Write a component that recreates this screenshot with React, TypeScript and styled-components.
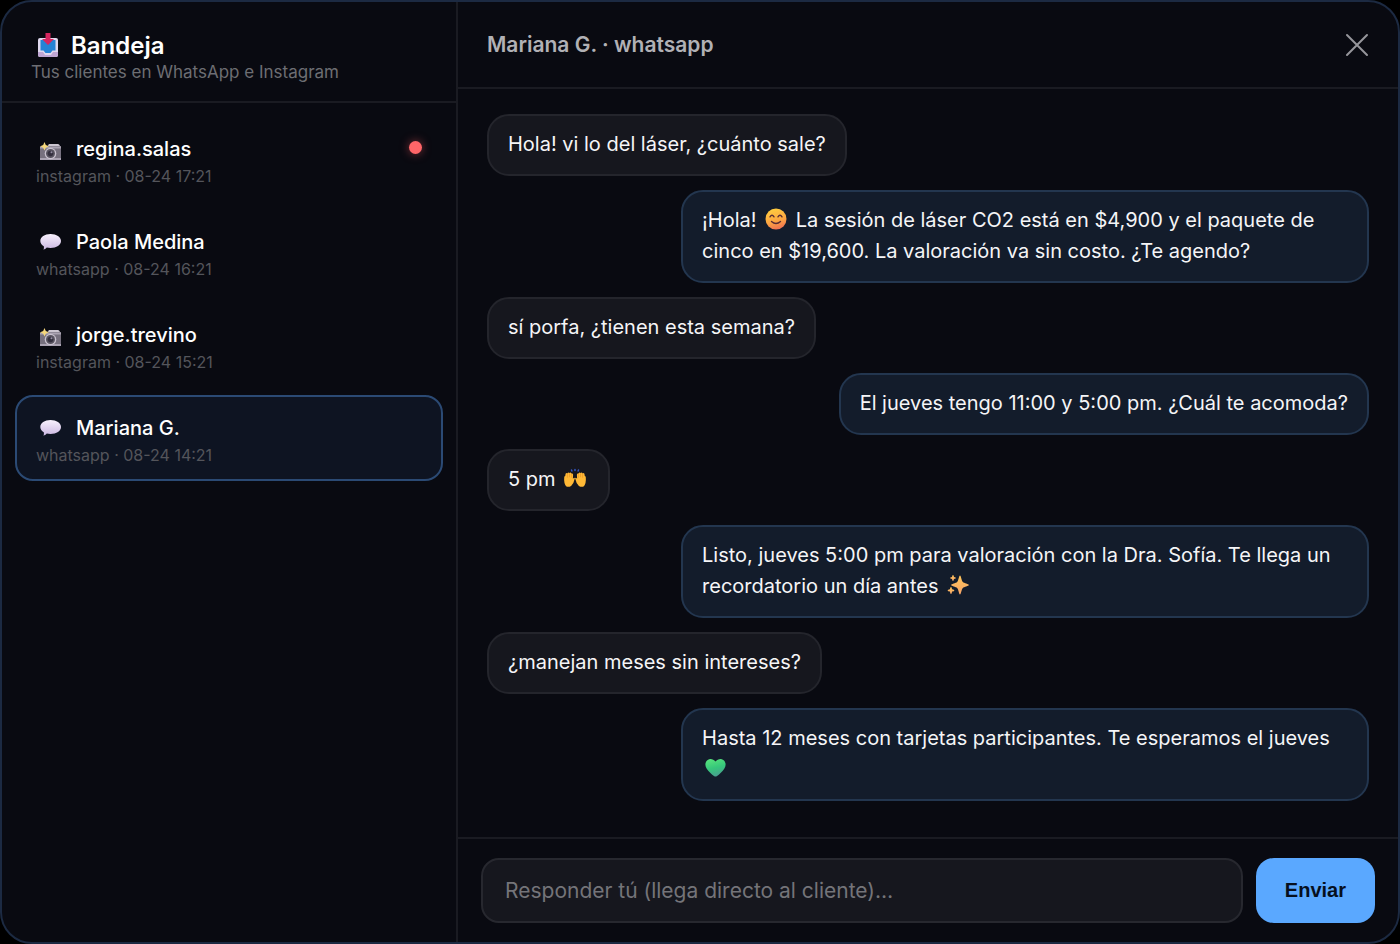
import React from "react";
import styled, { createGlobalStyle, css } from "styled-components";

const GlobalStyle = createGlobalStyle`
  *, *::before, *::after { box-sizing: border-box; }
  body {
    margin: 0;
    background: #000;
    color: #f5f5f7;
    font-family: Inter, "Liberation Sans", sans-serif;
  }
  h1, h2, p, ul, ol { margin: 0; padding: 0; }
  ul, ol { list-style: none; }
  button, input { font: inherit; color: inherit; }
`;

const line = "#1a1b22";

const Shell = styled.main`
  display: grid;
  grid-template-columns: minmax(280px, 456px) minmax(0, 1fr);
  min-height: 100vh;
  border: 2px solid #1c2a42;
  border-radius: 32px;
  background: #090a11;
  overflow: hidden;
`;

const Sidebar = styled.aside`
  border-right: 2px solid ${line};
`;

const SidebarHeader = styled.header`
  padding: 29px 29px 18px;
  border-bottom: 2px solid ${line};
`;

const Brand = styled.h1`
  display: flex;
  align-items: center;
  gap: 12px;
  font-size: 24px;
  line-height: 30px;
  font-weight: 600;
  color: #fff;
`;

const Tagline = styled.p`
  font-size: 17px;
  line-height: 22px;
  color: #6d6e73;
`;

const Conversations = styled.ul`
  display: flex;
  flex-direction: column;
  gap: 7px;
  padding: 13px;
`;

const Conversation = styled.button<{ $active?: boolean }>`
  display: block;
  width: 100%;
  padding: 16px 19px 12px;
  border: 2px solid ${(p) => (p.$active ? "#2b4a74" : "transparent")};
  border-radius: 18px;
  background: ${(p) => (p.$active ? "#0e1422" : "transparent")};
  text-align: left;
  cursor: pointer;
`;

const ConversationTop = styled.span`
  display: flex;
  align-items: center;
  gap: 12px;
  font-size: 20px;
  line-height: 30px;
  font-weight: 500;
  color: #fff;
`;

const Unread = styled.span`
  width: 13px;
  height: 13px;
  align-self: flex-start;
  margin: 7px 0 0 auto;
  border-radius: 50%;
  background: #ff6568;
  box-shadow: 0 0 10px rgba(255, 90, 95, 0.5);
`;

const Meta = styled.span`
  display: block;
  font-size: 16px;
  line-height: 24px;
  color: #54555b;
`;

const Chat = styled.section`
  display: flex;
  flex-direction: column;
  min-width: 0;
`;

const ChatHeader = styled.header`
  display: flex;
  align-items: center;
  justify-content: space-between;
  padding: 26px 24px 25px 29px;
  border-bottom: 2px solid ${line};
`;

const ChatTitle = styled.h2`
  font-size: 21px;
  line-height: 34px;
  font-weight: 600;
  color: #b1b1b5;
`;

const CloseButton = styled.button`
  display: flex;
  padding: 4px;
  border: 0;
  background: none;
  color: #96969b;
  cursor: pointer;
`;

const Messages = styled.ol`
  display: flex;
  flex: 1;
  flex-direction: column;
  align-items: flex-start;
  gap: 14px;
  padding: 25px 29px 36px;
`;

const incoming = css`
  border-color: #24252c;
  background: #16171e;
`;

const outgoing = css`
  align-self: flex-end;
  border-color: #23364f;
  background: #131c2b;
`;

const Bubble = styled.li<{ $mine?: boolean }>`
  max-width: 78%;
  padding: 13px 19px 14px;
  border: 2px solid;
  border-radius: 22px;
  font-size: 20px;
  line-height: 31px;
  ${(p) => (p.$mine ? outgoing : incoming)}
`;

const Composer = styled.form`
  display: flex;
  gap: 13px;
  padding: 19px 23px;
  border-top: 2px solid ${line};
`;

const Reply = styled.input`
  flex: 1;
  min-width: 0;
  height: 65px;
  padding: 0 22px;
  border: 2px solid #27282f;
  border-radius: 18px;
  background: #16171e;
  font-size: 21px;
  outline: none;
  &::placeholder { color: #747479; opacity: 1; }
`;

const Send = styled.button`
  padding: 0 29px;
  border: 0;
  border-radius: 18px;
  background: #5aa8ff;
  color: #06101f;
  font-family: "Liberation Sans", sans-serif;
  font-size: 20px;
  font-weight: 700;
  cursor: pointer;
`;

const Glyph = styled.svg`
  width: 28px;
  height: 26px;
  flex: none;
  vertical-align: -5px;
`;

const Inbox = () => (
  <Glyph viewBox="-1 1 28 26" role="img" aria-label="Bandeja de entrada">
    <path d="M8 6h16q2 0 2 2v15q0 2-2 2H8q-2 0-2-2V8q0-2 2-2z" fill="#e0d9ee" />
    <path d="M6 20h5l2 3h6l2-3h5v3q0 2-2 2H8q-2 0-2-2z" fill="#bfa6d4" />
    <path d="M8.500 8h15v10.500h-3l-2 2.500h-5l-2-2.500h-3z" fill="#2583d5" />
    <path d="M13.500 1h5v6H22l-6 6-6-6h3.500z" fill="#d6265f" />
  </Glyph>
);

const Camera = () => (
  <Glyph viewBox="0 1 28 26" role="img" aria-label="Instagram">
    <path d="M4 12h7l2-3h10l1 2h1v14H4z" fill="#77717f" />
    <path d="M12 11l1-2h9l2 2z" fill="#cbc5d0" />
    <path d="M4 11.500h21v2H4zM4 23h21v2H4z" fill="#aaa3b2" />
    <circle cx="14.500" cy="18.500" r="5.800" fill="#c9c2cf" />
    <circle cx="14.500" cy="18.500" r="4.500" fill="#595561" />
    <circle cx="14.500" cy="18.500" r="2.800" fill="#34303f" />
    <circle cx="15.500" cy="17.300" r="1" fill="#9690a4" />
    <path d="M8.500 7l1.300 2.900 3 1.400-3 1.400L8.500 15.500l-1.300-2.800-3-1.400 3-1.400z" fill="#f5d77c" />
  </Glyph>
);

const Balloon = () => (
  <Glyph viewBox="0 1 28 26" role="img" aria-label="WhatsApp">
    <defs>
      <linearGradient id="balloon" x1="0" y1="0" x2="0" y2="1">
        <stop offset="0" stopColor="#f8f1fd" />
        <stop offset="1" stopColor="#cbb7e2" />
      </linearGradient>
    </defs>
    <path
      d="M14.500 6C20.500 6 25 9.200 25 13s-4.500 7-10.500 7c-1.300 0-2.600-.1-3.700-.4-1 1.200-2.200 1.900-3.300 2.100.5-1 .6-2.200.3-3.400C5.700 17.100 4.300 15.200 4.300 13c0-3.800 4.400-7 10.200-7z"
      fill="url(#balloon)"
    />
  </Glyph>
);

const Smile = () => (
  <Glyph viewBox="1 0 28 26" role="img" aria-label="sonrisa">
    <defs>
      <linearGradient id="face" x1="0.300" y1="0" x2="0.600" y2="1">
        <stop offset="0" stopColor="#ffce3f" />
        <stop offset="0.600" stopColor="#fca542" />
        <stop offset="1" stopColor="#ef6f52" />
      </linearGradient>
    </defs>
    <circle cx="15" cy="13" r="10.500" fill="url(#face)" />
    <g fill="none" stroke="#5a2d33" strokeWidth="1.400" strokeLinecap="round">
      <path d="M9 10.800q2-3.200 4 0M17 10.800q2-3.200 4 0" />
      <path d="M10.500 15.500q4.500 4 9 0" />
    </g>
  </Glyph>
);

const Hands = () => (
  <Glyph viewBox="1 0 28 26" role="img" aria-label="manos arriba">
    <g stroke="#3659c8" strokeWidth="1.500" strokeLinecap="round">
      <path d="M15 4.500v1M11.500 5l.4 1M18.500 5l-.4 1" />
    </g>
    <g fill="#ffb936">
      <path id="hand" d="M4.200 12.500q-.2-1.500 1-1.500l.4-2.200q.7-1.300 1.800-.3.800-1.700 2-.6 1.400-1 2 .6 1.600-.4 1.700 1.200l-.2 4q1.500-1.500 2-.4-1 5-3.800 7.700-3 1.600-5 .2-2.400-3-1.900-8.700z" />
      <use href="#hand" transform="matrix(-1 0 0 1 30 0)" />
    </g>
    <g stroke="#e79022" strokeWidth="0.600" fill="none">
      <path d="M7.400 8.700v4M9.500 8.200v4M11.600 8.700v4M22.600 8.700v4M20.500 8.200v4M18.400 8.700v4" />
    </g>
  </Glyph>
);

const Sparkles = () => (
  <Glyph viewBox="1 0 28 26" role="img" aria-label="destellos">
    <defs>
      <linearGradient id="spark" x1="0" y1="0" x2="0" y2="1">
        <stop offset="0" stopColor="#ffc65a" />
        <stop offset="1" stopColor="#f6a368" />
      </linearGradient>
    </defs>
    <g fill="url(#spark)">
      <path d="M17 3.500c1 0 1.500 5.200 2.800 6.500s6 1.900 6 3-4.700 1.700-6 3-1.800 6.500-2.800 6.500-1.500-5.200-2.800-6.500-6-1.900-6-3 4.700-1.700 6-3S16 3.500 17 3.500z" />
      <path d="M10 3q.7 0 1 2 2 .3 2 1t-2 1q-.3 2-1 2T9 7Q7 6.700 7 6t2-1q.3-2 1-2z" />
      <path d="M8 15q.7 0 1.100 2.300 2.300.4 2.300 1.100t-2.300 1.100Q8.700 22 8 22t-1.100-2.500q-2.300-.4-2.300-1.100t2.300-1.100Q7.300 15 8 15z" />
    </g>
  </Glyph>
);

const Heart = () => (
  <Glyph viewBox="1 0 28 26" role="img" aria-label="corazón verde">
    <defs>
      <linearGradient id="heart" x1="0.300" y1="0" x2="0.600" y2="1">
        <stop offset="0" stopColor="#56e27c" />
        <stop offset="0.500" stopColor="#36c77b" />
        <stop offset="1" stopColor="#4a9b91" />
      </linearGradient>
    </defs>
    <path
      d="M14.500 6.500C16.500 4 20 3.300 22.300 4.900c2.700 1.900 3 5.600 1.100 8.600-1.900 3-5 5.900-7.700 7.700q-1.200.8-2.400 0c-2.700-1.800-5.800-4.700-7.700-7.700-1.900-3-1.600-6.700 1.100-8.600C9 3.300 12.500 4 14.500 6.500z"
      fill="url(#heart)"
    />
  </Glyph>
);

type Channel = "instagram" | "whatsapp";

const conversations: {
  name: string;
  channel: Channel;
  time: string;
  unread?: boolean;
  active?: boolean;
}[] = [
  { name: "regina.salas", channel: "instagram", time: "08-24 17:21", unread: true },
  { name: "Paola Medina", channel: "whatsapp", time: "08-24 16:21" },
  { name: "jorge.trevino", channel: "instagram", time: "08-24 15:21" },
  { name: "Mariana G.", channel: "whatsapp", time: "08-24 14:21", active: true },
];

const messages: { mine?: boolean; body: React.ReactNode }[] = [
  { body: "Hola! vi lo del láser, ¿cuánto sale?" },
  {
    mine: true,
    body: (
      <>
        ¡Hola! <Smile /> La sesión de láser CO2 está en $4,900 y el paquete de cinco en $19,600. La
        valoración va sin costo. ¿Te agendo?
      </>
    ),
  },
  { body: "sí porfa, ¿tienen esta semana?" },
  { mine: true, body: "El jueves tengo 11:00 y 5:00 pm. ¿Cuál te acomoda?" },
  { body: <>5 pm <Hands /></> },
  {
    mine: true,
    body: (
      <>
        Listo, jueves 5:00 pm para valoración con la Dra. Sofía. Te llega un recordatorio un día
        antes <Sparkles />
      </>
    ),
  },
  { body: "¿manejan meses sin intereses?" },
  {
    mine: true,
    body: <>Hasta 12 meses con tarjetas participantes. Te esperamos el jueves <Heart /></>,
  },
];

export default function App() {
  return (
    <>
      <GlobalStyle />
      <Shell>
        <Sidebar>
          <SidebarHeader>
            <Brand>
              <Inbox />
              Bandeja
            </Brand>
            <Tagline>Tus clientes en WhatsApp e Instagram</Tagline>
          </SidebarHeader>
          <Conversations>
            {conversations.map((c) => (
              <li key={c.name}>
                <Conversation type="button" $active={c.active} aria-pressed={!!c.active}>
                  <ConversationTop>
                    {c.channel === "instagram" ? <Camera /> : <Balloon />}
                    {c.name}
                    {c.unread && <Unread />}
                  </ConversationTop>
                  <Meta>
                    {c.channel} · {c.time}
                  </Meta>
                </Conversation>
              </li>
            ))}
          </Conversations>
        </Sidebar>
        <Chat>
          <ChatHeader>
            <ChatTitle>Mariana G. · whatsapp</ChatTitle>
            <CloseButton type="button" aria-label="Cerrar">
              <svg width="26" height="26" viewBox="0 0 26 26" fill="none" stroke="currentColor" strokeWidth="2" strokeLinecap="round">
                <path d="M3 3l20 20M23 3L3 23" />
              </svg>
            </CloseButton>
          </ChatHeader>
          <Messages>
            {messages.map((m, i) => (
              <Bubble key={i} $mine={m.mine}>
                {m.body}
              </Bubble>
            ))}
          </Messages>
          <Composer onSubmit={(e) => e.preventDefault()}>
            <Reply type="text" aria-label="Respuesta" placeholder="Responder tú (llega directo al cliente)…" />
            <Send type="submit">Enviar</Send>
          </Composer>
        </Chat>
      </Shell>
    </>
  );
}
